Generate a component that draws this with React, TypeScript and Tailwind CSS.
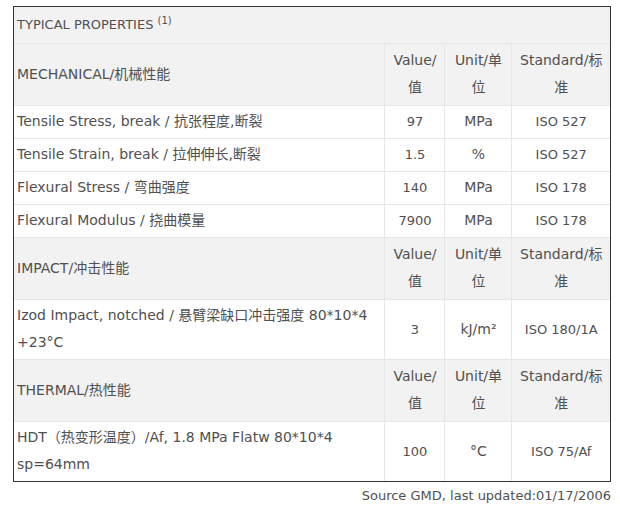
const font = { fontFamily: '"DejaVu Sans", "Noto Sans CJK SC", sans-serif' };

type Row =
  | { kind: 'section'; label: string }
  | { kind: 'data'; name: React.ReactNode; value: string; unit: React.ReactNode; standard: string; tall?: boolean };

const rows: Row[] = [
  { kind: 'section', label: 'MECHANICAL/机械性能' },
  { kind: 'data', name: 'Tensile Stress, break / 抗张程度,断裂', value: '97', unit: 'MPa', standard: 'ISO 527' },
  { kind: 'data', name: 'Tensile Strain, break / 拉伸伸长,断裂', value: '1.5', unit: '%', standard: 'ISO 527' },
  { kind: 'data', name: 'Flexural Stress / 弯曲强度', value: '140', unit: 'MPa', standard: 'ISO 178' },
  { kind: 'data', name: 'Flexural Modulus / 挠曲模量', value: '7900', unit: 'MPa', standard: 'ISO 178' },
  { kind: 'section', label: 'IMPACT/冲击性能' },
  {
    kind: 'data',
    name: (
      <>
        Izod Impact, notched / 悬臂梁缺口冲击强度 80*10*4
        <br />
        +23°C
      </>
    ),
    value: '3',
    unit: 'kJ/m²',
    standard: 'ISO 180/1A',
    tall: true,
  },
  { kind: 'section', label: 'THERMAL/热性能' },
  {
    kind: 'data',
    name: (
      <>
        HDT（热变形温度）/Af, 1.8 MPa Flatw 80*10*4
        <br />
        sp=64mm
      </>
    ),
    value: '100',
    unit: '°C',
    standard: 'ISO 75/Af',
    tall: true,
  },
];

const cell = 'border border-[#e6e6e6] px-[3px] py-0 align-middle';

export default function App() {
  return (
    <div className="w-[620px] h-[517px] bg-white text-[14px] leading-[27px] text-[#505050]" style={font}>
      <div className="pt-[6px] pl-[13px] pr-[9px]">
        <div className="border border-[#333]">
          <table className="w-full table-fixed border-collapse border-hidden">
            <colgroup>
              <col />
              <col className="w-[60px]" />
              <col className="w-[67px]" />
              <col className="w-[98px]" />
            </colgroup>
            <tbody>
              <tr className="h-[36px] bg-[#f2f2f2]">
                <td colSpan={4} className={`${cell} text-[13px]`}>
                  TYPICAL PROPERTIES <sup className="text-[10px] leading-none">(1)</sup>
                </td>
              </tr>
              {rows.map((r, i) =>
                r.kind === 'section' ? (
                  <tr key={i} className="h-[62px] bg-[#f2f2f2]">
                    <td className={cell}>{r.label}</td>
                    <td className={`${cell} text-center`}>
                      Value/
                      <br />值
                    </td>
                    <td className={`${cell} text-center`}>
                      Unit/单
                      <br />位
                    </td>
                    <td className={`${cell} text-center`}>
                      Standard/标
                      <br />准
                    </td>
                  </tr>
                ) : (
                  <tr key={i} className={r.tall ? 'h-[60px]' : 'h-[33px]'}>
                    <td className={cell}>{r.name}</td>
                    <td className={`${cell} text-center text-[13px]`}>{r.value}</td>
                    <td className={`${cell} text-center`}>{r.unit}</td>
                    <td className={`${cell} text-center text-[13px]`}>{r.standard}</td>
                  </tr>
                )
              )}
            </tbody>
          </table>
        </div>
        <div className="text-right text-[13px]">Source GMD, last updated:01/17/2006</div>
      </div>
    </div>
  );
}
